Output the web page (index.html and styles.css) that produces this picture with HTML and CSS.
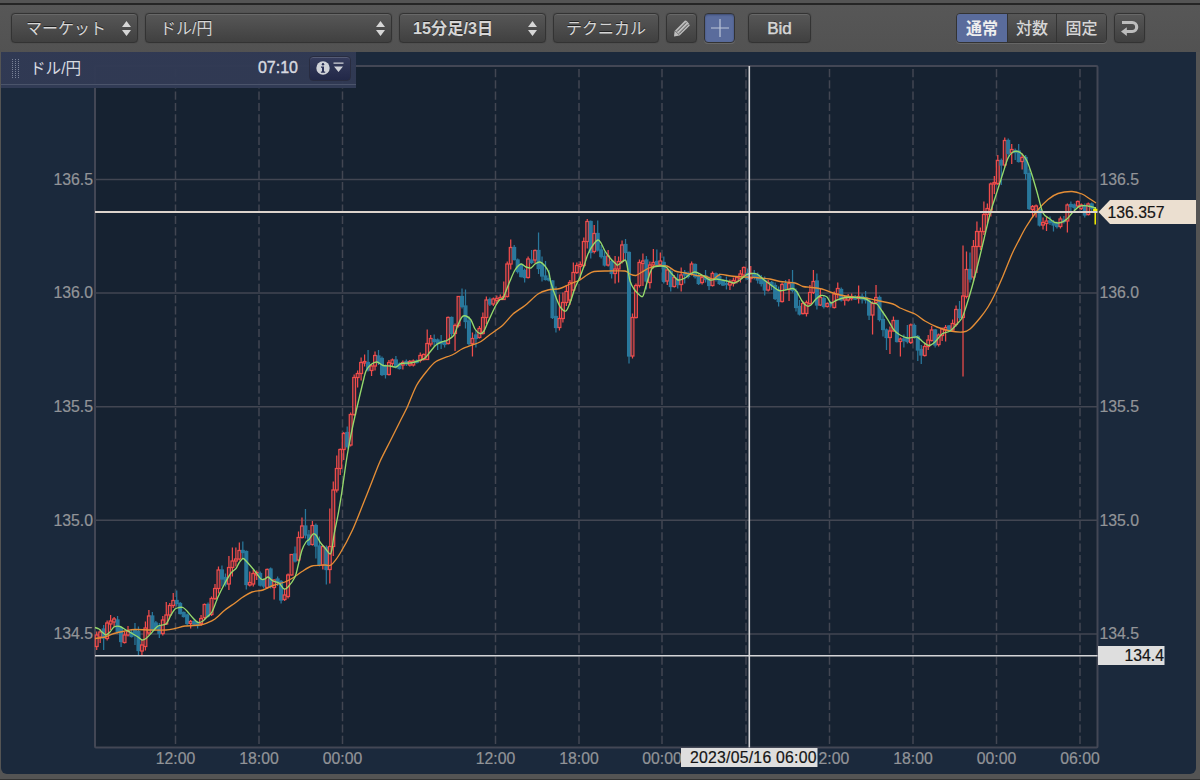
FILE: index.html
```html
<!DOCTYPE html>
<html lang="ja">
<head>
    <meta charset="UTF-8">
    <title>ドル/円 チャート</title>
    <link rel="stylesheet" href="styles.css">
</head>
<body>
    <div class="window">
        <div class="toolbar">
            <button class="btn select market"><span>マーケット</span>
                <svg class="updown" width="9" height="15" viewBox="0 0 9 15"><path d="M0 6 4.5 0 9 6zM0 9h9l-4.5 6z"/></svg>
            </button>
            <button class="btn select pair"><span>ドル/円</span>
                <svg class="updown" width="9" height="15" viewBox="0 0 9 15"><path d="M0 6 4.5 0 9 6zM0 9h9l-4.5 6z"/></svg>
            </button>
            <button class="btn select period"><span>15分足/3日</span>
                <svg class="updown" width="9" height="15" viewBox="0 0 9 15"><path d="M0 6 4.5 0 9 6zM0 9h9l-4.5 6z"/></svg>
            </button>
            <button class="btn technical">テクニカル</button>
            <button class="btn icon">
                <svg width="18" height="18" viewBox="0 0 18 18">
                    <path d="M1 17.4 1.6 12 12 1.6Q14.5 1.6 16.8 6.6L6.6 16.6z" fill="#bdbdbd"/>
                    <path d="M4 12.6 13.2 3.4M6 14.6 15.2 5.4" stroke="#484848" stroke-width="1"/>
                    <path d="M2 11.9 6.6 16.3" stroke="#686868" stroke-width=".8"/>
                </svg>
            </button>
            <button class="btn icon cross active">
                <svg width="18" height="18" viewBox="0 0 18 18"><path d="M9 0v18M0 9h18" stroke="#bcc5d8" stroke-width="1.2"/></svg>
            </button>
            <button class="btn bid">Bid</button>
            <div class="segment">
                <button class="active">通常</button>
                <button>対数</button>
                <button>固定</button>
            </div>
            <button class="btn icon reset">
                <svg width="18" height="17" viewBox="0 0 18 17">
                    <path d="M1 2.5h10.2a4.5 4.5 0 0 1 0 9H5" fill="none" stroke="#bdbdbd" stroke-width="3.2"/>
                    <path d="M0 11.5 5.8 7.3v8.6z" fill="#bdbdbd"/>
                </svg>
            </button>
        </div>

        <div class="chart">
            <svg id="plot" width="1195" height="722" viewBox="1 52 1195 722"></svg>
            <div class="legend">
                <span class="grip"></span>
                <span class="name">ドル/円</span>
                <span class="time">07:10</span>
                <button class="info">
                    <svg width="28" height="14" viewBox="0 0 28 14">
                        <circle cx="7" cy="7" r="6.7"/>
                        <path d="M5 5.5h3v5h1.2v1.2H4.9v-1.2H6V6.7H5z" fill="#2a3056"/>
                        <circle cx="7" cy="3.3" r="1.2" fill="#2a3056"/>
                        <path d="M17.5 1.5h10v1.3h-10zM18 5.5h9l-4.5 5.5z"/>
                    </svg>
                </button>
            </div>
        </div>
    </div>
    <script src="chart.js"></script>
</body>
</html>
```
FILE: styles.css
```css
* {
    box-sizing: border-box;
}
body {
    margin: 0;
    background: #545454;
    font-family: "Liberation Sans", "Noto Sans CJK JP", sans-serif;
    overflow: hidden;
}
.window {
    width: 1200px;
    height: 780px;
    border-top: 3px solid #545454;
    border-bottom: 1px solid #333;
    background: #545454;
}
.toolbar {
    display: flex;
    align-items: flex-start;
    height: 49px;
    padding: 8px 0 0 11px;
    border-top: 2px solid #252525;
    background: linear-gradient(#575757, #525252);
}
button {
    margin: 0;
    padding: 0;
    font-family: inherit;
    font-size: 17px;
    line-height: 27px;
    color: #d6d6d6;
    white-space: nowrap;
}
.btn {
    display: flex;
    align-items: center;
    justify-content: center;
    height: 30px;
    margin-right: 7px;
    border: 1px solid #333;
    border-radius: 4px;
    background: linear-gradient(#575757, #404040);
    box-shadow: inset 0 1px 0 #686868, 0 0 1px #333;
    text-shadow: 0 -1px 0 #222;
}
.select {
    justify-content: space-between;
    padding: 0 6px 0 14px;
}
.updown {
    fill: #d6d6d6;
}
.market {
    width: 127px;
}
.market span {
    font-size: 16px;
}
.pair {
    width: 247px;
}
.pair span {
    font-size: 16px;
}
.period {
    width: 147px;
    font-weight: bold;
    padding: 0 8px 0 13px;
}
.period span {
    font-size: 16.2px;
}
.technical {
    width: 106px;
    font-size: 16px;
}
.icon {
    width: 31px;
}
.bid {
    width: 63px;
    margin-left: 6px;
    -webkit-text-stroke: 0.5px #d6d6d6;
}
.active {
    background: #5a6c9c;
    color: #eee;
}
.btn.active {
    box-shadow: inset 0 1px 2px #3c4a70, 0 1px 0 #686868;
}
.segment {
    display: flex;
    height: 30px;
    margin-left: 138px;
    border: 1px solid #333;
    border-radius: 4px;
    overflow: hidden;
    box-shadow: 0 1px 0 #666;
}
.segment button {
    width: 49px;
    border: none;
    border-right: 1px solid #333;
    background: linear-gradient(#575757, #404040);
    font-size: 16px;
    font-weight: 500;
}
.segment button.active {
    width: 51px;
    background: #5a6c9c;
    font-weight: bold;
}
.segment button:last-child {
    border-right: none;
}
.reset {
    margin-left: 7px;
}
.chart {
    position: relative;
    width: 1195px;
    height: 722px;
    margin-left: 1px;
    background: #1b293c;
    border-radius: 0 0 6px 6px;
    overflow: hidden;
}
#plot {
    display: block;
}
.legend {
    position: absolute;
    left: 0;
    top: 0;
    display: flex;
    align-items: center;
    width: 355px;
    height: 36px;
    padding: 0 5px 4px 11px;
    background: linear-gradient(rgba(49, 58, 84, 0.97) 32px, #4b546b 32px, #4b546b 33px, #313b55 33px);
    color: #d8dae0;
}
.grip {
    width: 8px;
    height: 21px;
    margin-right: 10px;
    background: repeating-linear-gradient(#303a55 0 1px, transparent 1px 2px), repeating-linear-gradient(90deg, #7a8296 0 1px, #303a55 1px 3px);
}
.name {
    margin-top: -2px;
    font-size: 15.6px;
}
.time {
    margin-left: auto;
    font-size: 16px;
    -webkit-text-stroke: 0.4px #d8dae0;
}
.info {
    width: 42px;
    height: 25px;
    margin-left: 11px;
    border: 1px solid #282c40;
    border-radius: 4px;
    background: linear-gradient(#363c5c, #222848);
    box-shadow: inset 0 1px 0 #555b75;
    line-height: 0;
}
.info svg {
    fill: #d0d2d8;
}

/* chart */
.plot-bg {
    fill: #162231;
    stroke: #434755;
    stroke-width: 2;
}
.grid {
    stroke: #424652;
    stroke-width: 1.5;
}
.grid.time-line {
    stroke-dasharray: 8.2 3.1;
}
.label {
    fill: #929498;
    font-size: 15.8px;
    stroke: #929498;
    stroke-width: 0.2;
}
.up {
    stroke: #f04c4b;
    fill: #162231;
    fill-opacity: 0.75;
    stroke-width: 1.25;
}
.down {
    stroke: #29789c;
    fill: #29789c;
    stroke-width: 1.25;
}
.last {
    stroke: #f4f000;
    fill: #f4f000;
    stroke-width: 1.5;
}
.ma {
    fill: none;
    stroke-width: 1.35;
    stroke-linejoin: round;
}
.ma.short {
    stroke: #96da6c;
}
.ma.long {
    stroke: #e58e36;
}
.price-line {
    stroke: #dcd3cc;
    stroke-width: 1.8;
}
.cursor-line {
    stroke: #d5d5d8;
    stroke-width: 1.6;
}
.price-tag {
    fill: #ebdfd0;
}
.cursor-tag {
    fill: #dedede;
}
.tag-text {
    fill: #141414;
    stroke: #141414;
    stroke-width: 0.2;
    font-size: 15.8px;
}
```
FILE: chart.js
```js
// One candle per entry: direction, high, body top, body bottom, low
var candles = `
r 631.5 635 646.5 650|r 629 632 637 643|b 625 629 638 650|r 620.5 623 638.5 640.5|r 615 621 624 630|r 617 619 622 627
b 616 620 631.5 633.5|b 626.5 628 641.5 647|r 632 635 642.5 643.5|r 626 631.5 635 636.5|b 630 632.5 636.5 637.5|b 623 630 635 645
b 626.5 631.5 650.5 656|r 640 645 651 655.5|r 621.5 628 646.5 650.5|r 610 616 633 635|b 612 616 630 631.5|b 621 623 628.5 630
b 623 626.5 633.5 638|r 616 620 633.5 635.5|r 602 615 624 625|r 603 605.5 615 617|r 593 600.5 605.5 608|b 590.5 600.5 603.5 606.5
b 602 603.5 613.5 614.5|b 611.5 612.5 616.5 617.5|b 613.5 615 623.5 626|r 620 621.5 623.5 628.5|b 619.5 621.5 624 625|b 621.5 622.5 625.5 628.5
r 615 618.5 623.5 626|r 603.5 604.5 617.5 620|b 602.5 604.5 616 617.5|r 596.5 598.5 614.5 616|r 584 588.5 598.5 600|r 566.5 570 588.5 593.5
b 565.5 570 579 586.5|b 573.5 577.5 584 586.5|r 556 567.5 584 590|r 547.5 561 567.5 576.5|r 547.5 559 561 566.5|r 542.5 550.5 559 560.5
b 541.5 550.5 552.5 558.5|b 550.5 551.5 584.5 589.5|r 571.5 582.5 585 586.5|r 570 573.5 584 586.5|r 570.5 572.5 575 580|b 571.5 573.5 585 586.5
b 578.5 580 586 588.5|r 568.5 569.5 587.5 588.5|b 567.5 569 586.5 588.5|r 579.5 580 587.5 599.5|b 576.5 579 582.5 586|b 580 581.5 600 603.5
r 588.5 595 599.5 601|r 573.5 575 596.5 598.5|r 554 554.5 575 575.5|b 546.5 554 561 562.5|r 531.5 537.5 560 561.5|r 517.5 526 537.5 538.5
b 509 526 535 538.5|b 530 535 544.5 546|r 521 525.5 544.5 545.5|b 523.5 525.5 546 558.5|b 536.5 546 565 566.5|r 545 546.5 565 569.5
b 545.5 547.5 569.5 584.5|r 508.5 546.5 569.5 583.5|r 481.5 490 546.5 556|r 455.5 468.5 490 492.5|r 448.5 449.5 468.5 475|r 432 433.5 449.5 460
b 426.5 432.5 446.5 448.5|r 412.5 414.5 445 446.5|r 374.5 377.5 414.5 416|r 370.5 373.5 377.5 387.5|r 357.5 362.5 373.5 380.5|r 354.5 361.5 363 366.5
b 350 362.5 370 371.5|r 364.5 366 370.5 376|r 351.5 355.5 366 370.5|b 350 356 362.5 365|b 356.5 358.5 374.5 376|b 364.5 366 374.5 378.5
r 360 362.5 374.5 375.5|r 358.5 360 363.5 366.5|b 356 360 366.5 368.5|b 362.5 364 368.5 369.5|r 360.5 362.5 365 369.5|b 359.5 361.5 364 366
r 360 361.5 365 366.5|r 359.5 361 365 366.5|b 359.5 361 362.5 363.5|r 352.5 355.5 360.5 362.5|r 353.5 354.5 359.5 360.5|r 329.5 343.5 359.5 360
r 335 338.5 344 346.5|b 334.5 339.5 341.5 346.5|b 338.5 340 343.5 350|b 335 341.5 343.5 349|b 340 341.5 344.5 347.5|r 316.5 317.5 343.5 344.5
b 316.5 317.5 333.5 336.5|r 323.5 325.5 333.5 351|r 296 296.5 325.5 327.5|b 288.5 296.5 306.5 308.5|b 289.5 306 321.5 328.5|b 316.5 321 343.5 345.5
r 332.5 338.5 343.5 356.5|b 330 335 338.5 347.5|r 326 328.5 337.5 338.5|r 312.5 317.5 333.5 334.5|r 296.5 300 317.5 324|b 297.5 299.5 304 306
r 297.5 299 304 306|r 295.5 298.5 300.5 303.5|r 294.5 297.5 299.5 300|r 281.5 296.5 299.5 300|r 261.5 264 296.5 297.5|r 239.5 247.5 264 269.5
b 245 247.5 259.5 260.5|b 258.5 260 271.5 273.5|b 263.5 265.5 276.5 277.5|b 268.5 270.5 277.5 282.5|r 256.5 259 277.5 278.5|b 250 260 262.5 264
r 249.5 250.5 260 263.5|b 232.5 250.5 268.5 274|b 256.5 265 276 281.5|b 261 276 279.5 280.5|b 270 278.5 280 281.5|b 280 281 317.5 319
b 286.5 316.5 327.5 332.5|r 294.5 318.5 327.5 330.5|r 292.5 302.5 318.5 322.5|r 285 291.5 302.5 306|r 280 282.5 300 305|r 262.5 272.5 290 292.5
r 262.5 265.5 272.5 274|r 261.5 264.5 266.5 280|r 237.5 241.5 265.5 267.5|r 219 221.5 241.5 248.5|b 220.5 221.5 252.5 258.5|r 225 233.5 251.5 253.5
b 220.5 233.5 250 251.5|b 245 250 256.5 258.5|b 251.5 256.5 265 266.5|r 250 256 265 266.5|b 260 261.5 273.5 278.5|r 256 269 273.5 283.5
r 256.5 261.5 269 282.5|r 240.5 245 261.5 263.5|b 239 244.5 252.5 260.5|b 251.5 252.5 356 363.5|r 313.5 317.5 356 358.5|r 283.5 285.5 317.5 318.5
r 259.5 262.5 285.5 287.5|r 253.5 261 263.5 286|b 256 260 281 289.5|r 261.5 265 282.5 288.5|r 249 262.5 265 268.5|b 249.5 261.5 264.5 266
r 252.5 261 264.5 265.5|b 256.5 262.5 281.5 283.5|r 267.5 270 281 285|b 268.5 271.5 286.5 291.5|r 275 277.5 286.5 287.5|b 273.5 279.5 284.5 288.5
r 267.5 275 284.5 291.5|b 270 272.5 275 283.5|b 271.5 273.5 276.5 278.5|r 261.5 264 274 275.5|b 263.5 264.5 276.5 278.5|b 273.5 276 283.5 285
r 276 277.5 282.5 284.5|b 270 276 279.5 282.5|b 276.5 278.5 285.5 290|r 271.5 273.5 285.5 286.5|b 272.5 274 278.5 281.5|b 273.5 276.5 283.5 285
b 279.5 281 285 286|b 276.5 283.5 284.5 289.5|r 279.5 282.5 285 290|r 277.5 280.5 283.5 286.5|r 276.5 277.5 281.5 283.5|r 270 274 278.5 282.5
r 266.5 267.5 275 277.5|b 268.5 273.5 278.5 280|r 266 273.5 278.5 282.5|b 270 273.5 276.5 279.5|b 272.5 275 280 283.5|b 275 278.5 283.5 286.5
b 276.5 281 290 295.5|r 280 282.5 290 291.5|b 281 282.5 285.5 290|b 282.5 285.5 298.5 300|b 286.5 290 301.5 306.5|r 282.5 284.5 301.5 302.5
b 280 283.5 288.5 290|r 279 283.5 289.5 301|b 270 282.5 290.5 292.5|b 288.5 291.5 307.5 311.5|b 300 306.5 314 315.5|r 301.5 303.5 313.5 314.5
r 300.5 302.5 313.5 316.5|r 285 292.5 303.5 306|r 270 281.5 292.5 294|b 273.5 281 305 309.5|r 288.5 297.5 305 306|b 295 298.5 306.5 308.5
r 302.5 303.5 306.5 307.5|b 301.5 302.5 305 307.5|r 291.5 294 307.5 308.5|r 282.5 288.5 294 298.5|b 287.5 289.5 300 301.5|r 296 297.5 300 305.5
r 294 296.5 300 301.5|r 293.5 296.5 298.5 300.5|b 295 297.5 299 300|r 285.5 296.5 298.5 303.5|b 293.5 296.5 299 303.5|b 291 297.5 300 303.5
b 299 301 315 320|r 301.5 303.5 315 334.5|r 285 297.5 302.5 304|b 295.5 297.5 319.5 321.5|b 311.5 319.5 329.5 336.5|b 328.5 330 337.5 350
r 326.5 331 337.5 354|r 316.5 320.5 331 331.5|b 320 320.5 341.5 342.5|r 337.5 339 341.5 356.5|b 334.5 339 340.5 347.5|b 325 338.5 341.5 343.5
r 323.5 325 342.5 344|b 323.5 325.5 337.5 338.5|b 335 336.5 350 361|b 345 349.5 355 364|r 343.5 346.5 355.5 356.5|r 335 340 346.5 350
r 326 330 340.5 341.5|b 329 330 345 347.5|r 333.5 335 344.5 346.5|r 327.5 329 335.5 341|r 325 327.5 330 341.5|b 325 326 330 331.5
r 319.5 323.5 330 331|r 305.5 309.5 324.5 326.5|b 301 309.5 317.5 320|r 245.5 296 317.5 376.5|r 251.5 269.5 296.5 298.5|b 252.5 269.5 279 282.5
r 240 246.5 277 281|r 221.5 231.5 246.5 273|r 227.5 231.5 246.5 250|r 201.5 214.5 231.5 235|r 203.5 208.5 214.5 223.5|r 182.5 184 210 216.5
r 176 182.5 184 194|r 155 160.5 183.5 185|b 158.5 160.5 165 185|r 137.5 140.5 165 167.5|b 138.5 140.5 153.5 158.5|r 144 149.5 152.5 164
b 148.5 150.5 152.5 160|b 144 151 161.5 162.5|r 153.5 157.5 161.5 169.5|b 155 157.5 173.5 179.5|b 168.5 173.5 208.5 210|r 205 206.5 209.5 217.5
r 204.5 206 211.5 217.5|b 207.5 209.5 225 226.5|r 217.5 222.5 225 229.5|r 216 221 223.5 231|b 216.5 221 222.5 225|b 220 222.5 225 231.5
b 221.5 224 226.5 228.5|r 216.5 219 226.5 228.5|b 216 220 221.5 223.5|r 203.5 205 221 232.5|b 201.5 204.5 206.5 211.5|b 203.5 205 207.5 210
r 200.5 201.5 206 207.5|r 203.5 205 208.5 210|b 203.5 206 215 217.5|r 202.5 204 214.5 215.5|b 202.5 204 208.5 211.5|y 207 209.5 211 224.5
`.trim().split(/[|\n]/).map(row => row.split(' '));

var maShort = '95,627.5 99,629 102,632 106,635 110,632 114,627 120,626.5 126,630 133,634 138,637 142,640 146,638.5 151,633.5 158,626 166,624 171,615 175,609 179,607.5 183,607.5 187,611 193,618 198,622.5 203,621 207,617 212,612 218,597 225,583 231,573 236,568.5 239,563 243,558.5 247,562 254,570 261,579 265,579 268,577 273,581 279,583 284,589 288,587 295,577 298,566 302,550 306,542 309,539.5 313,534 316,535 320,542 325,548 330,554 332,549 334,535 338,515 342,491 346,463 349,445 353,425 358,403 363,382 366,371 371,364.5 377,362 383,365.5 390,366 396,367 401,363.5 410,363 418,361 425,358 430,352 436,345 443,341.5 447,340.5 454,335 458,325 462,317 466,316 471,320 475,329 480,333.5 484,331 488,322 496,305 500,299.5 503,298.5 506,291 510,281 515,270 521,264 526,267 531,268 535,264 540,262 545,266 549,273 551,283 557,300 561,308 566,311 570,303 575,288 580,277 584,266 588,254 593,245 598,240 601,243 605,251 610,258 616,264 618,265 625,260 627,265 630,281 634,289 640,295.5 643,296 646,286 650,273 653,267.5 660,266 666,267 672,274 678,280 685,278 690,274 695,272 702,275 710,280 716,279 722,280 729,281.5 734,283 740,280 746,275 751,273.5 757,274 764,280 771,285 779,290.5 785,290 793,288.5 797,292 802,301 807,306 811,305 816,299 821,295.5 827,297 831,303 837,300 846,297.5 858,297.5 866,299 872,303 877,304 882,311 888,320 894,330 900,335 908,338 917,337 923,342 929,345.5 935,342 942,334 950,331 957,324 962,318 966,307 972,287 978,264 984,239 990,214 996,195 1003,173 1008,158 1013,152 1018,151.5 1022,154 1027,161 1032,175 1037,192 1043,213 1050,219 1055,222.5 1061,222.5 1067,219 1073,212 1080,206 1088,206 1096,208';
var maLong = '95,638.5 105,637 114,633.5 125,631 135,629.5 150,630 166,630 175,628.5 185,626 200,625 207,623 215,619 225,610 235,603 243,597 252,592 263,590 273,585.5 285,582 295,576.5 302,571.5 312,566 325,565 331,565 340,553.5 352.5,530 363.5,503 373,479 380,461.5 390,441.5 400,421.5 407.5,406.5 416.5,385.5 426.5,371.5 436,361.5 453,354.5 462,349 472,345 480,342 490,334.5 503,325 513,314 525,305.5 538,294 548,290 560,288.5 570,284 580,280 587,275 594,271.5 608,271 625,271 630,274 636,275.5 642,272 649,268 656,266 667,266 675,271 685,273 697,275.5 705,276 713,279 720,274.5 731,276 745,277 755,277.5 770,279 780,281.5 795,283 803,286.5 812,287.5 822,289 830,292 840,295 852,297 866,298 875,300 893,304 900,308 915,314 925,321 937,327 950,331 963,332 970,329 980,318 988,307 995,294 1003,276 1012,254 1018,242 1026,227 1037,211 1048,199.5 1058,193.5 1072,191.5 1082,194 1090,199 1096,203';

var LEFT = 95, RIGHT = 1097.5, TOP = 66, BOTTOM = 747.5;
var STEP = (RIGHT - LEFT - 0.5) / 288;

function line(cls, x1, y1, x2, y2) {
    return `<line class="${cls}" x1="${x1}" y1="${y1}" x2="${x2}" y2="${y2}"/>`;
}
function text(cls, x, y, anchor, str) {
    return `<text class="${cls}" x="${x}" y="${y}" text-anchor="${anchor}">${str}</text>`;
}
// Smooth curve through the given points
function curve(cls, points) {
    var p = points.split(' ').map(s => s.split(',').map(Number));
    var d = 'M' + p[0];
    for (var i = 0; i < p.length - 1; i++) {
        var a = p[i - 1] || p[i], b = p[i], c = p[i + 1], e = p[i + 2] || c;
        d += `C${b[0] + (c[0] - a[0]) / 7} ${b[1] + (c[1] - a[1]) / 7} ${c[0] - (e[0] - b[0]) / 7} ${c[1] - (e[1] - b[1]) / 7} ${c[0]} ${c[1]}`;
    }
    return `<path class="${cls}" d="${d}"/>`;
}

var out = `<rect class="plot-bg" x="${LEFT}" y="${TOP}" width="${RIGHT - LEFT}" height="${BOTTOM - TOP}" rx="1"/>`;

// Price grid
['136.5', '136.0', '135.5', '135.0', '134.5'].forEach((price, i) => {
    var y = 179.5 + i * 113.6;
    out += line('grid', LEFT, y, RIGHT, y);
    out += text('label', 93, y + 5.3, 'end', price);
    out += text('label', 1099.5, y + 5.3, 'start', price);
});

// Time grid
[[175.5, '12:00'], [259, '18:00'], [342.5, '00:00'], [495.5, '12:00'], [579, '18:00'], [662, '00:00'],
 [746, ''], [829.5, ''], [913, '18:00'], [996.5, '00:00'], [1080, '06:00']].forEach(([x, time]) => {
    out += line('grid time-line', x, TOP + 3, x, BOTTOM);
    out += text('label', x, 764, 'middle', time);
});
// the hour beside the cursor tag is cut off by it
out += text('label', 849.3, 764, 'end', '2:00');

// Candles
var types = { r: 'up', b: 'down', y: 'last' };
candles.forEach(([type, high, top, bottom, low], i) => {
    var x = 96.7 + i * STEP;
    out += `<g class="${types[type]}">` + line('wick', x, high, x, low) +
        `<rect x="${x - 1.4}" y="${top}" width="2.8" height="${bottom - top}"/></g>`;
});

out += curve('ma long', maLong);
out += curve('ma short', maShort);

// Current price and cursor
out += line('price-line', LEFT, 212, RIGHT, 212);
out += '<path class="price-tag" d="M1098.5 212 1110 200h86v24h-86z"/>';
out += text('tag-text', 1107.5, 217.5, 'start', '136.357');
out += line('cursor-line', LEFT, 655.7, RIGHT, 655.7);
out += line('cursor-line', 749.3, TOP, 749.3, BOTTOM);
out += '<rect class="cursor-tag" x="1098" y="646" width="66.5" height="19"/>';
out += text('tag-text', 1164, 661.3, 'end', '134.4');
out += '<rect class="cursor-tag" x="681" y="748" width="136.5" height="19"/>';
out += '<text class="tag-text" x="690" y="762.8" textLength="126.5">2023/05/16 06:00</text>';

document.getElementById('plot').innerHTML = out;
```
